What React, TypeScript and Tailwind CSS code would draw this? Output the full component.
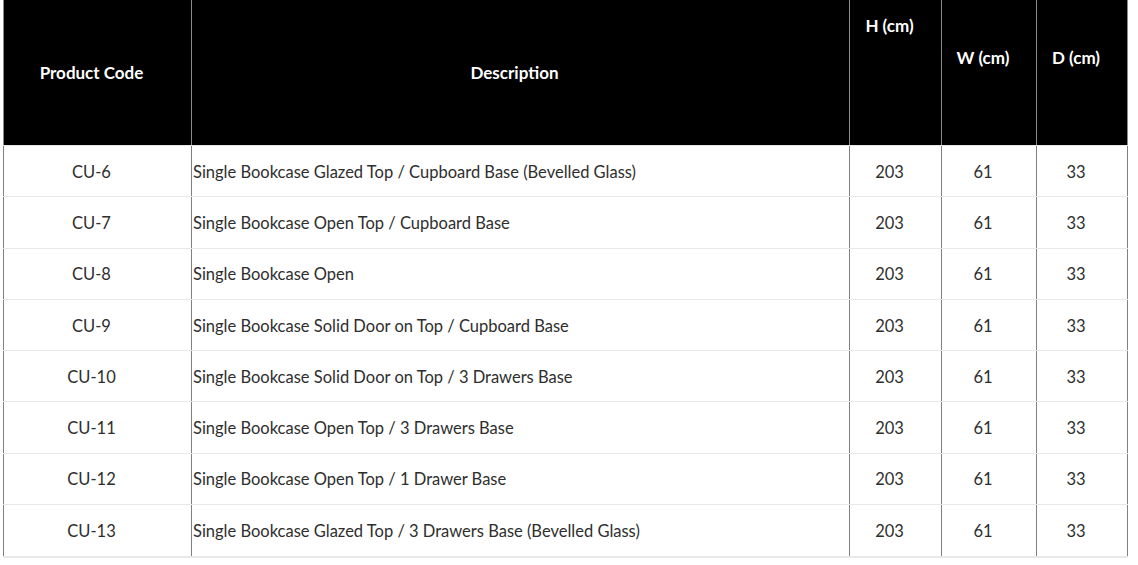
const rows = [
  { code: "CU-6", desc: "Single Bookcase Glazed Top / Cupboard Base (Bevelled Glass)" },
  { code: "CU-7", desc: "Single Bookcase Open Top / Cupboard Base" },
  { code: "CU-8", desc: "Single Bookcase Open" },
  { code: "CU-9", desc: "Single Bookcase Solid Door on Top / Cupboard Base" },
  { code: "CU-10", desc: "Single Bookcase Solid Door on Top / 3 Drawers Base" },
  { code: "CU-11", desc: "Single Bookcase Open Top / 3 Drawers Base" },
  { code: "CU-12", desc: "Single Bookcase Open Top / 1 Drawer Base" },
  { code: "CU-13", desc: "Single Bookcase Glazed Top / 3 Drawers Base (Bevelled Glass)" },
]

const cols = "grid grid-cols-[188px_658px_92px_95px_92px]"

export default function App() {
  return (
    <div className="min-h-screen bg-white pl-[3px] font-['Lato',sans-serif]">
      <div className="w-[1125px]">
        {/* Header */}
        <div className={`${cols} h-[146px] bg-black text-white font-bold text-[17px] border-b border-[#e8e8e8]`}>
          <div className="flex items-center justify-center pr-[12px] border-l border-[#8a8a8a]">Product Code</div>
          <div className="flex items-center justify-center pr-[12px] border-l border-[#8a8a8a]">Description</div>
          <div className="flex justify-center pr-[12px] pt-[13px] border-l border-[#8a8a8a]">H (cm)</div>
          <div className="flex justify-center pr-[12px] pt-[45px] border-l border-[#8a8a8a]">W (cm)</div>
          <div className="flex justify-center pr-[12px] pt-[45px] border-l border-r border-[#8a8a8a]">D (cm)</div>
        </div>

        {/* Body */}
        <div className="border-b-2 border-[#e8e8e8] text-[16.5px] text-[#2e2e2e]">
          {rows.map((r, i) => (
            <div
              key={r.code}
              className={`${cols} h-[51.25px] ${i < rows.length - 1 ? "border-b border-[#e8e8e8]" : ""}`}
            >
              <div className="flex items-center justify-center pr-[12px] pt-[2px] border-l border-[#808080]">{r.code}</div>
              <div className="flex items-center pl-[1px] pt-[2px] border-l border-[#808080] whitespace-nowrap">{r.desc}</div>
              <div className="flex items-center justify-center pr-[12px] pt-[2px] border-l border-[#808080]">203</div>
              <div className="flex items-center justify-center pr-[12px] pt-[2px] border-l border-[#808080]">61</div>
              <div className="flex items-center justify-center pr-[12px] pt-[2px] border-l border-r border-[#808080]">33</div>
            </div>
          ))}
        </div>
      </div>
    </div>
  )
}
